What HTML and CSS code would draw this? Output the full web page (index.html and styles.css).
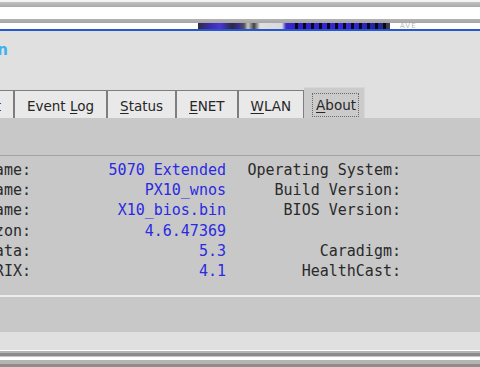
FILE: index.html
```html
<!DOCTYPE html>
<html lang="en">
<head>
<meta charset="utf-8">
<title>System Information</title>
<link rel="stylesheet" href="styles.css">
</head>
<body>
<div class="screen">
  <div class="frame-top"></div>
  <div class="strip">
    <div class="banner"></div>
    <span class="banner-tail">AVE</span>
  </div>
  <div class="accent"></div>

  <div class="header">
    <div class="title-wrap"><h1 class="title">System Information</h1></div>
    <div class="tabs">
      <div class="tab"><span>Copyright</span></div>
      <div class="tab"><span>Event <u>L</u>og</span></div>
      <div class="tab"><span><u>S</u>tatus</span></div>
      <div class="tab"><span><u>E</u>NET</span></div>
      <div class="tab"><span><u>W</u>LAN</span></div>
      <div class="tab tab-active"><span class="focus"><u>A</u>bout</span></div>
    </div>
  </div>

  <div class="content">
    <div class="info">
      <div class="cell label">Platform Name:</div><div class="cell value">5070 Extended</div><div class="cell label">Operating System:</div>
      <div class="cell label">Product Name:</div><div class="cell value">PX10_wnos</div><div class="cell label">Build Version:</div>
      <div class="cell label">BIOS Name:</div><div class="cell value">X10_bios.bin</div><div class="cell label">BIOS Version:</div>
      <div class="cell label">VMware Horizon:</div><div class="cell value">4.6.47369</div><div class="cell label"></div>
      <div class="cell label">Imprivata:</div><div class="cell value">5.3</div><div class="cell label">Caradigm:</div>
      <div class="cell label">CITRIX:</div><div class="cell value">4.1</div><div class="cell label">HealthCast:</div>
    </div>
  </div>

  <div class="footer"></div>
  <div class="frame-bottom"></div>
</div>
</body>
</html>
```

FILE: styles.css
```css
html, body {
  margin: 0;
  padding: 0;
  background: #ffffff;
}

body {
  width: 480px;
  height: 367px;
  overflow: hidden;
}

.screen {
  display: flex;
  flex-direction: column;
  width: 480px;
}

.frame-top {
  height: 23px;
  background: linear-gradient(to bottom,
    #f4f4f4 0, #f4f4f4 2px,
    #c2c2c2 2px, #a9a9a9 7px,
    #ffffff 7px, #ffffff 19px,
    #b4b4b4 19px, #a6a6a6 23px);
}

.strip {
  height: 6px;
  background: #ffffff;
  display: flex;
  align-items: center;
  padding-left: 198px;
}

.banner {
  width: 192px;
  height: 6px;
  background:
    repeating-linear-gradient(to right,
      transparent 0, transparent 5px,
      rgba(0, 0, 0, 0.85) 5px, rgba(0, 0, 0, 0.85) 8px),
    linear-gradient(to right,
      #2c2c3c 0, #3a2a9a 10px, #4a36d8 22px, #2a2a44 34px,
      #3a2a8a 40px, #50505a 46px, #c8c8c8 50px, #404040 56px,
      #e0e0e0 62px, #d8d8e0 84px, #3a2ac8 88px, #3020c0 100px,
      #3a28d8 150px, #2020a0 180px, #404040 192px);
  background-size: 100px 6px, 192px 6px;
  background-position: 92px 0, 0 0;
  background-repeat: no-repeat, no-repeat;
}

.banner-tail {
  font-family: "DejaVu Sans", sans-serif;
  font-size: 7px;
  line-height: 6px;
  color: #b8b8b8;
  margin-left: 10px;
  letter-spacing: 1px;
}

.accent {
  height: 2px;
  background: #2458cc;
}

.header {
  background: #e0e0e0;
  height: 87px;
  display: flex;
  flex-direction: column;
  justify-content: space-between;
}

.title-wrap {
  width: 8px;
  display: flex;
  justify-content: flex-end;
  padding-top: 10px;
}

.title {
  margin: 0;
  white-space: nowrap;
  font-family: "DejaVu Sans", sans-serif;
  font-weight: bold;
  font-size: 15px;
  line-height: 18px;
  color: #42b0ee;
}

.tabs {
  width: 365px;
  height: 31px;
  display: flex;
  justify-content: flex-end;
  align-items: flex-end;
}

.tab {
  flex-shrink: 0;
  box-sizing: border-box;
  height: 28px;
  padding: 3px 12px 0;
  display: flex;
  align-items: center;
  white-space: nowrap;
  background: #e9e9e9;
  border: 1px solid #7e7e7e;
  border-bottom: none;
  font-family: "DejaVu Sans", sans-serif;
  font-size: 13.5px;
  color: #262626;
}

.tab u {
  text-underline-offset: 2px;
}

.tab-active {
  height: 31px;
  padding: 3px 5px 0 8px;
  background: #cbcbcb;
  border: 1px solid #d6d6d6;
  border-left: none;
  border-bottom: none;
}

.focus {
  border: 1px dotted #6a6a6a;
  padding: 3px 2px 3px 3px;
}

.content {
  background: #c8c8c8;
  height: 214px;
  padding-top: 37px;
  box-sizing: border-box;
}

.info {
  box-sizing: border-box;
  height: 142px;
  border-top: 1px solid #a2a2a2;
  border-bottom: 2px solid #ececec;
  padding-top: 4px;
  display: grid;
  grid-template-columns: 31px 195px 175px;
  grid-auto-rows: 20.2px;
  align-content: start;
  font-family: "DejaVu Sans Mono", monospace;
  font-size: 15px;
  line-height: 20.2px;
}

.cell {
  display: flex;
  justify-content: flex-end;
  white-space: nowrap;
}

.label {
  color: #2a2a2a;
}

.value {
  color: #2a2ae2;
}

.footer {
  height: 18px;
  background: #e0e0e0;
}

.frame-bottom {
  height: 17px;
  background: linear-gradient(to bottom,
    #ffffff 0, #ffffff 1px,
    #b4b4b4 1px, #b4b4b4 3px,
    #8c8c8c 3px, #8c8c8c 6px,
    #c4c4c4 6px, #c4c4c4 7px,
    #ffffff 7px, #ffffff 10px,
    #b4b4b4 10px, #b4b4b4 14px,
    #8c8c8c 14px, #8c8c8c 17px);
}
```
